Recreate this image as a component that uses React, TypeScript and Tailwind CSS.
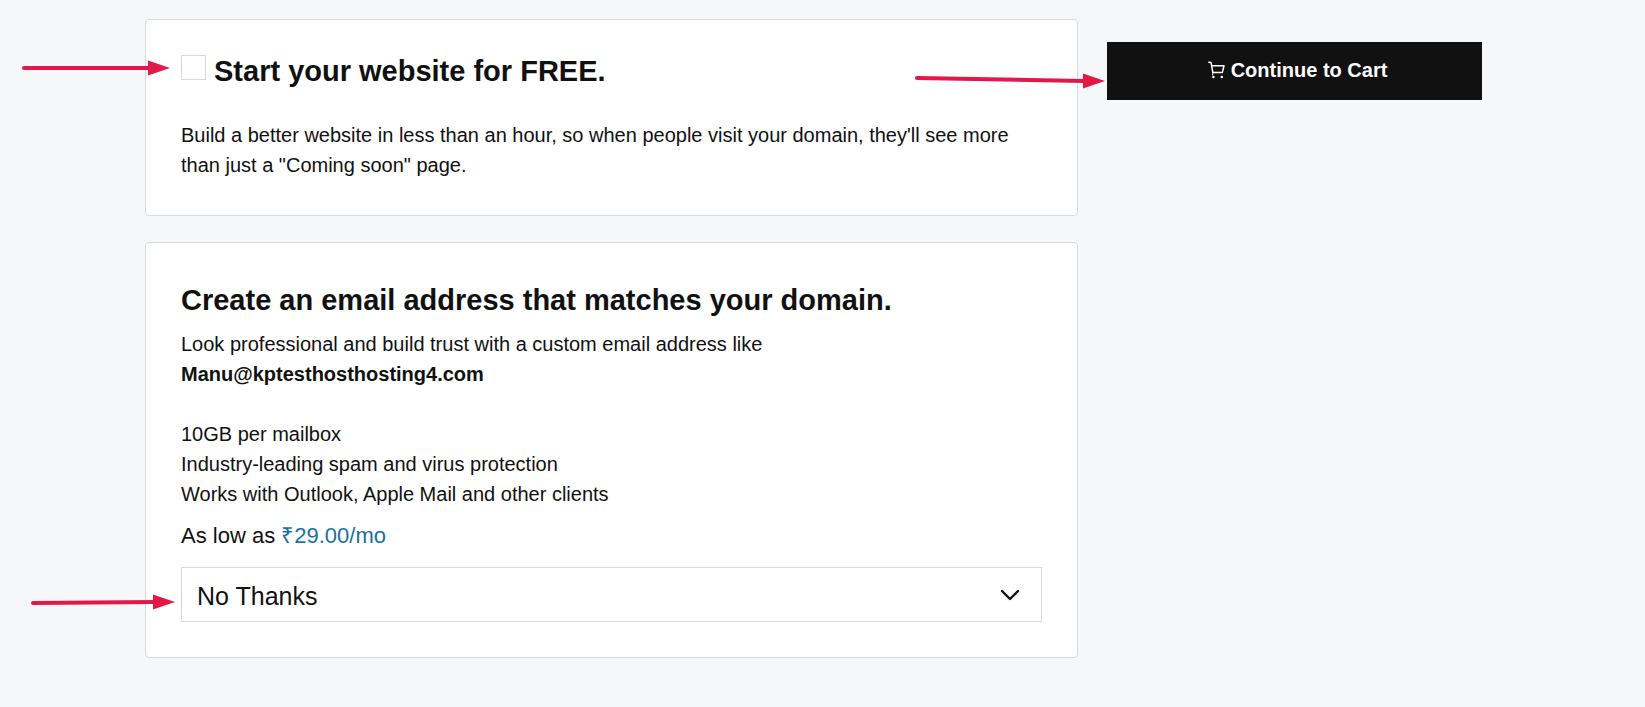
import { useState } from "react";
import type { ReactNode } from "react";

const emailFeatures = [
  "10GB per mailbox",
  "Industry-leading spam and virus protection",
  "Works with Outlook, Apple Mail and other clients",
];

const Card = ({ children }: { children: ReactNode }) => {
  return (
    <section className="rounded-[4px] border border-[#d4dbe0] bg-white p-[35px]">
      {children}
    </section>
  );
};

type ArrowProps = {
  className: string;
  length: number;
  slope?: number;
};

// Pointer that ends at the left side of its relative parent
const Arrow = ({ className, length, slope = 0 }: ArrowProps) => {
  const shaftEnd = length - 21;
  return (
    <svg
      aria-hidden="true"
      className={`pointer-events-none absolute right-full z-10 max-w-none ${className}`}
      width={length}
      height={20}
      viewBox={`0 0 ${length} 20`}
      fill="#e31748"
    >
      <path
        d={`M2 ${10 - slope}L${shaftEnd} 10`}
        stroke="#e31748"
        strokeWidth="4"
        strokeLinecap="round"
      />
      <path d={`M${length - 22} 2.5L${length} 10L${length - 22} 17.5Z`} />
    </svg>
  );
};

const CartIcon = () => {
  return (
    <svg
      aria-hidden="true"
      width="17"
      height="18"
      viewBox="0 0 17 18"
      fill="none"
      stroke="currentColor"
      strokeWidth="1.5"
      strokeLinecap="round"
      strokeLinejoin="round"
    >
      <path d="M0.8 1.2L3 1.6L4.9 11.6H14.3L16 4.8H3.8" />
      <path d="M4.9 11.6L4.6 14" strokeWidth="1" />
      <circle cx="5.4" cy="16" r="1.3" fill="currentColor" stroke="none" />
      <circle cx="13.8" cy="16" r="1.3" fill="currentColor" stroke="none" />
    </svg>
  );
};

const App = () => {
  const [website, setWebsite] = useState(false);
  const [plan, setPlan] = useState("none");

  return (
    <main className="min-h-screen bg-[#f5f7f9] px-4 py-[19px] font-['Liberation_Sans',Arial,sans-serif] text-xl leading-[30px] text-[#111111] lg:pr-[163px] lg:pl-[145px]">
      <div className="flex flex-col gap-[29px] lg:flex-row lg:items-start">
        <div className="flex min-w-0 flex-1 flex-col gap-[26px]">
          <Card>
            <div className="relative flex items-start gap-2">
              <Arrow className="top-[3px] mr-[11px]" length={148} />
              <input
                id="website"
                type="checkbox"
                checked={website}
                onChange={(e) => setWebsite(e.target.checked)}
                className="size-[25px] shrink-0 appearance-none border border-[#d4dbe0] bg-white checked:bg-[#111111]"
              />
              <h2 className="text-[29px] leading-8 font-bold">
                <label htmlFor="website">Start your website for FREE.</label>
              </h2>
            </div>
            <p className="mt-[33px]">
              Build a better website in less than an hour, so when people visit
              your domain, they'll see more than just a "Coming soon" page.
            </p>
          </Card>

          <Card>
            <h2 className="text-[29px] leading-11 font-bold">
              Create an email address that matches your domain.
            </h2>
            <p className="mt-[7px]">
              Look professional and build trust with a custom email address like
              <strong className="block">Manu@kptesthosthosting4.com</strong>
            </p>
            <ul className="mt-[30px]">
              {emailFeatures.map((feature) => (
                <li key={feature}>{feature}</li>
              ))}
            </ul>
            <p className="mt-[10px] text-[22px] leading-[34px]">
              As low as <span className="text-[#1b6fa3]">₹29.00/mo</span>
            </p>
            <div className="relative mt-[14px]">
              <Arrow className="top-[25px] mr-[6px]" length={144} slope={-1} />
              <select
                aria-label="Email plan"
                value={plan}
                onChange={(e) => setPlan(e.target.value)}
                className="block h-[55px] w-full appearance-none border border-[#d4dbe0] bg-white px-[15px] pt-[2px] text-[25px]"
              >
                <option value="none">No Thanks</option>
                <option value="essentials">Email Essentials</option>
              </select>
              <svg
                aria-hidden="true"
                className="pointer-events-none absolute top-[22px] right-[22px]"
                width="20"
                height="12"
                viewBox="0 0 20 12"
                fill="none"
                stroke="#111111"
                strokeWidth="2.4"
                strokeLinecap="round"
                strokeLinejoin="round"
              >
                <path d="M2 2L10 10L18 2" />
              </svg>
            </div>
          </Card>
        </div>

        <div className="relative lg:mt-[23px] lg:w-[375px]">
          <Arrow className="top-[29px] mr-[2px]" length={190} slope={3} />
          <button
            type="button"
            className="flex h-[58px] w-full items-center justify-center gap-[6px] bg-[#111111] pb-[2px] pl-[6px] font-bold text-white"
          >
            <CartIcon />
            Continue to Cart
          </button>
        </div>
      </div>
    </main>
  );
};

export default App;
